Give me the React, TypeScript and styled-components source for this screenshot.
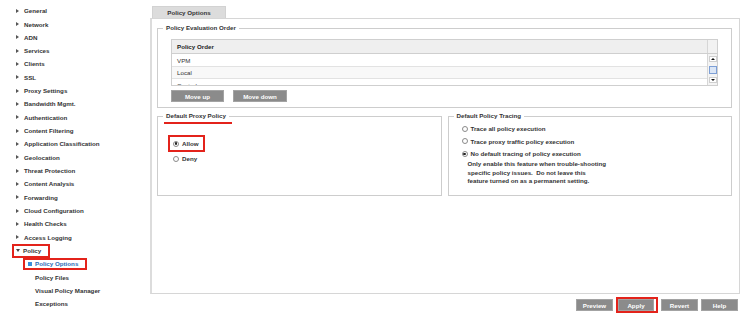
import styled, { createGlobalStyle } from "styled-components";

const GlobalStyle = createGlobalStyle`
  body {
    margin: 0;
    background: #fff;
    font-family: "Liberation Sans", Arial, sans-serif;
    font-size: 6.2px;
    font-weight: bold;
    color: #333;
  }
`;

const RED = "#e3231b";

const topItems = [
  "General",
  "Network",
  "ADN",
  "Services",
  "Clients",
  "SSL",
  "Proxy Settings",
  "Bandwidth Mgmt.",
  "Authentication",
  "Content Filtering",
  "Application Classification",
  "Geolocation",
  "Threat Protection",
  "Content Analysis",
  "Forwarding",
  "Cloud Configuration",
  "Health Checks",
  "Access Logging",
];

const policyChildren = [
  { label: "Policy Options", active: true },
  { label: "Policy Files" },
  { label: "Visual Policy Manager" },
  { label: "Exceptions" },
];

const App = () => {
  return (
    <>
      <GlobalStyle />
      <Page>
        <Sidebar>
          {topItems.map((item) => (
            <NavRow key={item} $indent={12}>
              <NavLabel>
                <Arrow />
                {item}
              </NavLabel>
            </NavRow>
          ))}
          <NavRow $indent={12}>
            <NavLabel $marked>
              <Arrow $open />
              Policy
            </NavLabel>
          </NavRow>
          {policyChildren.map((child) => (
            <NavRow key={child.label} $indent={23}>
              <NavLabel $marked={child.active} $active={child.active} $sub>
                <Bullet $visible={child.active} />
                {child.label}
              </NavLabel>
            </NavRow>
          ))}
        </Sidebar>

        <Main>
          <Tab>Policy Options</Tab>
          <Panel>
            <Group>
              <Legend>Policy Evaluation Order</Legend>
              <OrderTable>
                <TableHead>
                  <HeadCell>Policy Order</HeadCell>
                  <HeadCorner />
                </TableHead>
                <TableBody>
                  <RowList>
                    <OrderRow>VPM</OrderRow>
                    <OrderRow $alt>Local</OrderRow>
                    <OrderRow>Central</OrderRow>
                  </RowList>
                  <ScrollBar>
                    <ScrollArrow $up />
                    <ScrollThumb />
                    <ScrollArrow />
                  </ScrollBar>
                </TableBody>
              </OrderTable>
              <ButtonRow>
                <GrayButton $width={53}>Move up</GrayButton>
                <GrayButton $width={54}>Move down</GrayButton>
              </ButtonRow>
            </Group>

            <Columns>
              <Group $bottom={6}>
                <Legend $underlined>Default Proxy Policy</Legend>
                <ProxyChoices>
                  <MarkBox>
                    <RadioLine>
                      <Radio $checked />
                      Allow
                    </RadioLine>
                  </MarkBox>
                  <RadioLine $indent={10} $height={13}>
                    <Radio />
                    Deny
                  </RadioLine>
                </ProxyChoices>
              </Group>

              <Group $bottom={9}>
                <Legend>Default Policy Tracing</Legend>
                <TracingChoices>
                  <RadioLine $indent={8} $height={12.5}>
                    <Radio />
                    Trace all policy execution
                  </RadioLine>
                  <RadioLine $indent={8} $height={12.5}>
                    <Radio />
                    Trace proxy traffic policy execution
                  </RadioLine>
                  <RadioLine $indent={8} $height={12.5}>
                    <Radio $checked />
                    No default tracing of policy execution
                  </RadioLine>
                  <Note>
                    Only enable this feature when trouble-shooting
                    <br />
                    specific policy issues.&nbsp; Do not leave this
                    <br />
                    feature turned on as a permanent setting.
                  </Note>
                </TracingChoices>
              </Group>
            </Columns>
          </Panel>

          <Actions>
            <GrayButton $width={37}>Preview</GrayButton>
            <MarkBox $pad={0}>
              <GrayButton $width={36}>Apply</GrayButton>
            </MarkBox>
            <GrayButton $width={37}>Revert</GrayButton>
            <GrayButton $width={37}>Help</GrayButton>
          </Actions>
        </Main>
      </Page>
    </>
  );
};

export default App;

const Page = styled.div`
  display: flex;
  width: 750px;
  height: 323px;
  overflow: hidden;
`;

const Sidebar = styled.nav`
  width: 150px;
  flex-shrink: 0;
  padding-top: 4px;
  box-sizing: border-box;
`;

const NavRow = styled.div<{ $indent: number }>`
  display: flex;
  align-items: center;
  height: 13.33px;
  padding-left: ${(p) => p.$indent}px;
`;

const NavLabel = styled.span<{
  $marked?: boolean;
  $active?: boolean;
  $sub?: boolean;
}>`
  display: inline-flex;
  align-items: center;
  height: ${(p) => (p.$sub ? 12 : 14)}px;
  box-sizing: border-box;
  border: 2px solid ${(p) => (p.$marked ? RED : "transparent")};
  padding: 0 7px 0 ${(p) => (p.$sub ? 3 : 2)}px;
  color: ${(p) => (p.$active ? "#2b6cb8" : "#333")};
  white-space: nowrap;
`;

const Arrow = styled.span<{ $open?: boolean }>`
  width: 0;
  height: 0;
  border-style: solid;
  border-color: transparent;
  ${(p) =>
    p.$open
      ? `border-width: 3px 2.5px 0 2.5px; border-top-color: #444; margin-right: 3px;`
      : `border-width: 2.5px 0 2.5px 3px; border-left-color: #555; margin-right: 5px;`}
`;

const Bullet = styled.span<{ $visible?: boolean }>`
  width: 3.5px;
  height: 3.5px;
  margin-right: 3.5px;
  background: ${(p) => (p.$visible ? "#3a8fdb" : "transparent")};
`;

const Main = styled.main`
  flex: 1;
  display: flex;
  flex-direction: column;
  padding: 6px 10px 0 0;
  min-width: 0;
`;

const Tab = styled.div`
  width: 74px;
  height: 12px;
  margin-left: 2px;
  box-sizing: border-box;
  display: flex;
  align-items: center;
  justify-content: center;
  background: #dcdcdc;
  border: 1px solid #d2d2d2;
  border-bottom: none;
`;

const Panel = styled.section`
  height: 276px;
  box-sizing: border-box;
  border: 1px solid #d6d6d6;
  border-left: 2px solid #dcdcdc;
  padding: 5px 7px 0 5px;
`;

const Group = styled.fieldset<{ $bottom?: number }>`
  margin: 0;
  min-width: 0;
  border: 1px solid #cdcdcd;
  padding: 0 6px ${(p) => p.$bottom ?? 5}px 5px;
`;

const Legend = styled.legend<{ $underlined?: boolean }>`
  position: relative;
  padding: 0 3px;
  line-height: 8px;
  color: #333;

  ${(p) =>
    p.$underlined &&
    `
    &::after {
      content: "";
      position: absolute;
      left: 1px;
      right: -3px;
      bottom: -4px;
      height: 2px;
      background: ${RED};
    }
  `}
`;

const OrderTable = styled.div`
  margin: 7px 7px 0 8px;
  border: 1px solid #cfcfcf;
  font-weight: normal;
`;

const TableHead = styled.div`
  display: grid;
  grid-template-columns: 1fr 10px;
  height: 13px;
  background: #efefef;
  border-bottom: 1px solid #cfcfcf;
`;

const HeadCell = styled.div`
  display: flex;
  align-items: center;
  padding-left: 5px;
  font-weight: bold;
  color: #222;
`;

const HeadCorner = styled.div`
  border-left: 1px solid #d6d6d6;
  background: #f2f2f2;
`;

const TableBody = styled.div`
  display: grid;
  grid-template-columns: 1fr 10px;
  height: 31px;
  overflow: hidden;
`;

const RowList = styled.div`
  overflow: hidden;
`;

const OrderRow = styled.div<{ $alt?: boolean }>`
  height: 12px;
  display: flex;
  align-items: center;
  padding-left: 5px;
  border-bottom: 1px solid #e2e2e2;
  background: ${(p) => (p.$alt ? "#f8f8f8" : "#fff")};
  color: #333;

  &:nth-child(2) {
    height: 11px;
  }
`;

const ScrollBar = styled.div`
  display: flex;
  flex-direction: column;
  justify-content: space-between;
  align-items: center;
  border-left: 1px solid #d6d6d6;
  background: #f4f4f4;
  padding: 2px 0;
`;

const ScrollArrow = styled.span<{ $up?: boolean }>`
  width: 8px;
  height: 6px;
  display: flex;
  align-items: center;
  justify-content: center;
  background: #fff;
  border: 1px solid #cfcfcf;
  box-sizing: border-box;

  &::after {
    content: "";
    border-style: solid;
    border-color: transparent;
    ${(p) =>
      p.$up
        ? `border-width: 0 2px 2px 2px; border-bottom-color: #111;`
        : `border-width: 2px 2px 0 2px; border-top-color: #111;`}
  }
`;

const ScrollThumb = styled.span`
  width: 8px;
  height: 8px;
  box-sizing: border-box;
  border: 1px solid #7d9fd6;
  background: #dbe6f6;
`;

const ButtonRow = styled.div`
  display: flex;
  gap: 9px;
  margin: 4px 0 0 8px;
`;

const GrayButton = styled.button<{ $width: number }>`
  width: ${(p) => p.$width}px;
  height: 12px;
  padding: 0;
  box-sizing: border-box;
  border: 1px solid #a3a3a3;
  background: #8b8b8b;
  color: #fff;
  font: inherit;
  font-weight: bold;
  cursor: pointer;
`;

const Columns = styled.div`
  display: grid;
  grid-template-columns: 1fr 1fr;
  gap: 6px;
  margin-top: 4px;
`;

const ProxyChoices = styled.div`
  margin-top: 15px;
  display: flex;
  flex-direction: column;
  align-items: flex-start;
`;

const TracingChoices = styled.div`
  margin-top: 2.5px;
`;

const MarkBox = styled.div<{ $pad?: number }>`
  display: inline-flex;
  border: 2px solid ${RED};
  padding: ${(p) => (p.$pad ?? 2) + "px " + ((p.$pad ?? 2) + 2) + "px"};
  margin-left: ${(p) => (p.$pad === 0 ? 0 : 5)}px;
  padding-left: ${(p) => (p.$pad === 0 ? 0 : 3)}px;
`;

const RadioLine = styled.div<{ $indent?: number; $height?: number }>`
  display: flex;
  align-items: center;
  gap: 3px;
  height: ${(p) => p.$height ?? 9}px;
  margin-left: ${(p) => p.$indent ?? 0}px;
  white-space: nowrap;
`;

const Radio = styled.span<{ $checked?: boolean }>`
  width: 6px;
  height: 6px;
  box-sizing: border-box;
  border: 1px solid #8a8a8a;
  border-radius: 50%;
  background: #fff;
  display: flex;
  align-items: center;
  justify-content: center;

  &::after {
    content: "";
    width: 2.5px;
    height: 2.5px;
    border-radius: 50%;
    background: ${(p) => (p.$checked ? "#222" : "transparent")};
  }
`;

const Note = styled.p`
  margin: 0 0 0 14px;
  line-height: 8.5px;
  color: #333;
`;

const Actions = styled.div`
  display: flex;
  justify-content: flex-end;
  align-items: center;
  gap: 3px;
  margin-top: 3px;
  padding-right: 2px;
`;
